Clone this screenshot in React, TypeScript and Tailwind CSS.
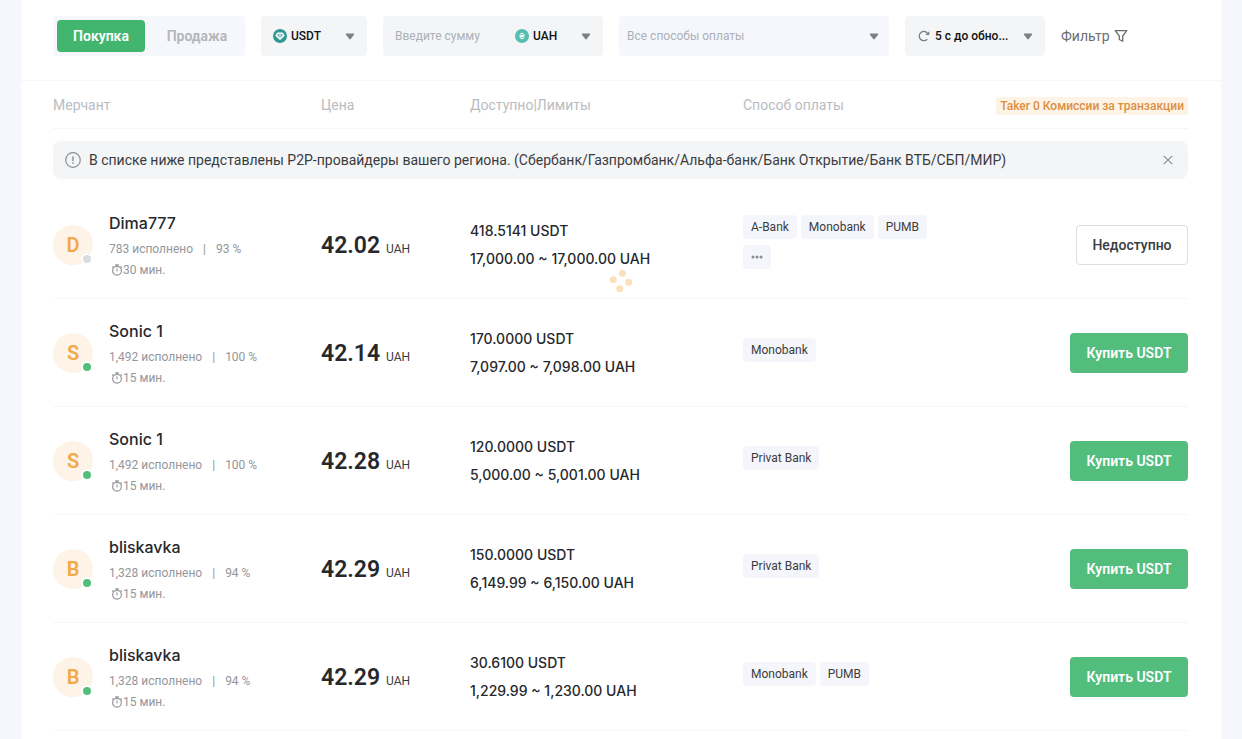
import { useState } from "react";

type Offer = {
  id: number;
  name: string;
  orders: string;
  rate: string;
  minutes: number;
  online: boolean;
  price: string;
  available: string;
  limits: string;
  methods: string[];
  more?: boolean;
};

const offers: Offer[] = [
  {
    id: 1,
    name: "Dima777",
    orders: "783",
    rate: "93 %",
    minutes: 30,
    online: false,
    price: "42.02",
    available: "418.5141 USDT",
    limits: "17,000.00 ~ 17,000.00 UAH",
    methods: ["A-Bank", "Monobank", "PUMB"],
    more: true,
  },
  {
    id: 2,
    name: "Sonic 1",
    orders: "1,492",
    rate: "100 %",
    minutes: 15,
    online: true,
    price: "42.14",
    available: "170.0000 USDT",
    limits: "7,097.00 ~ 7,098.00 UAH",
    methods: ["Monobank"],
  },
  {
    id: 3,
    name: "Sonic 1",
    orders: "1,492",
    rate: "100 %",
    minutes: 15,
    online: true,
    price: "42.28",
    available: "120.0000 USDT",
    limits: "5,000.00 ~ 5,001.00 UAH",
    methods: ["Privat Bank"],
  },
  {
    id: 4,
    name: "bliskavka",
    orders: "1,328",
    rate: "94 %",
    minutes: 15,
    online: true,
    price: "42.29",
    available: "150.0000 USDT",
    limits: "6,149.99 ~ 6,150.00 UAH",
    methods: ["Privat Bank"],
  },
  {
    id: 5,
    name: "bliskavka",
    orders: "1,328",
    rate: "94 %",
    minutes: 15,
    online: true,
    price: "42.29",
    available: "30.6100 USDT",
    limits: "1,229.99 ~ 1,230.00 UAH",
    methods: ["Monobank", "PUMB"],
  },
];

export default function App() {
  const [side, setSide] = useState<"buy" | "sell">("buy");
  const [noticeOpen, setNoticeOpen] = useState(true);

  return (
    <div className="min-h-screen bg-[#f5f7fc] font-[Roboto,'Noto_Sans',sans-serif] text-[#26282c]">
      <main className="relative mx-auto min-h-screen max-w-[1200px] bg-white">
        {/* Filters */}
        <div className="flex items-center gap-4 border-b border-[#f5f6fa] px-8 pt-4 pb-6">
          <div className="flex h-10 w-48 shrink-0 gap-2 rounded bg-[#f5f7fc] p-1">
            <SideButton active={side === "buy"} onClick={() => setSide("buy")}>
              Покупка
            </SideButton>
            <SideButton active={side === "sell"} onClick={() => setSide("sell")}>
              Продажа
            </SideButton>
          </div>

          <div className="flex h-10 w-[106px] shrink-0 items-center rounded bg-[#f3f5f7] px-3">
            <TetherIcon />
            <select
              aria-label="Монета"
              className="ml-1 min-w-0 flex-1 appearance-none bg-transparent text-xs font-medium text-[#121212] outline-none"
            >
              <option>USDT</option>
            </select>
            <CaretIcon />
          </div>

          <div className="flex h-10 w-[220px] shrink-0 items-center rounded bg-[#f3f5f7] px-3">
            <input
              type="text"
              aria-label="Сумма"
              placeholder="Введите сумму"
              className="w-[120px] bg-transparent text-xs outline-none placeholder:text-[#adb1b8]"
            />
            <HryvniaIcon />
            <select
              aria-label="Валюта"
              className="ml-1 min-w-0 flex-1 appearance-none bg-transparent text-xs font-medium text-[#121212] outline-none"
            >
              <option>UAH</option>
            </select>
            <CaretIcon />
          </div>

          <div className="flex h-10 w-[270px] items-center rounded bg-[#f5f7fc] pr-2.5 pl-2">
            <select
              aria-label="Способ оплаты"
              className="min-w-0 flex-1 appearance-none bg-transparent text-xs text-[#adb1b8] outline-none"
            >
              <option>Все способы оплаты</option>
            </select>
            <CaretIcon />
          </div>

          <div className="flex h-10 w-[140px] shrink-0 items-center rounded bg-[#f3f5f7] px-3">
            <RefreshIcon />
            <select
              aria-label="Обновление"
              className="ml-1 min-w-0 flex-1 appearance-none bg-transparent text-xs font-medium text-[#121212] outline-none"
            >
              <option>5 с до обно...</option>
            </select>
            <CaretIcon />
          </div>

          <button type="button" className="flex items-center gap-1 text-sm text-[#6b6d72]">
            Фильтр
            <FunnelIcon />
          </button>
        </div>

        {/* Offers */}
        <div className="pr-[33px] pl-8">
          <table className="w-full table-fixed border-separate border-spacing-0 text-left">
            <thead>
              <tr className="h-12 text-sm text-[#b9bcc2] [&>th]:border-b [&>th]:border-[#f5f6f8]">
                <th className="w-[268px] font-normal">Мерчант</th>
                <th className="w-[149px] font-normal">Цена</th>
                <th className="w-[273px] font-normal">Доступно|Лимиты</th>
                <th className="font-normal">Способ оплаты</th>
                <th className="w-[200px] text-right font-normal">
                  <span className="inline-block rounded-xs bg-[#fdf3e6] px-1 text-xs leading-[18px] font-medium whitespace-nowrap text-[#dc8f3f]">
                    Taker 0 Комиссии за транзакции
                  </span>
                </th>
              </tr>
            </thead>
            <tbody>
              {noticeOpen && (
                <tr>
                  <td colSpan={5} className="py-3">
                    <div className="flex h-[38px] items-center rounded-lg bg-[#f4f5f7] px-3">
                      <InfoIcon />
                      <p className="ml-2 flex-1 text-sm text-[#3a3c40]">
                        В списке ниже представлены P2P-провайдеры вашего региона.
                        (Сбербанк/Газпромбанк/Альфа-банк/Банк Открытие/Банк ВТБ/СБП/МИР)
                      </p>
                      <button type="button" aria-label="Закрыть" onClick={() => setNoticeOpen(false)}>
                        <CloseIcon />
                      </button>
                    </div>
                  </td>
                </tr>
              )}
              {offers.map((offer) => (
                <OfferRow key={offer.id} offer={offer} />
              ))}
            </tbody>
          </table>
        </div>

        <Loader />
      </main>
    </div>
  );
}

function SideButton({
  active,
  onClick,
  children,
}: {
  active: boolean;
  onClick: () => void;
  children: React.ReactNode;
}) {
  return (
    <button
      type="button"
      onClick={onClick}
      className={`h-8 rounded-sm text-sm font-semibold ${
        active ? "w-22 bg-[#42b66f] text-white" : "flex-1 text-[#b3b5b9]"
      }`}
    >
      {children}
    </button>
  );
}

function OfferRow({ offer }: { offer: Offer }) {
  return (
    <tr className="h-[108px] [&>td]:border-b [&>td]:border-[#f5f6f8]">
      <td>
        <div className="flex items-center gap-4">
          <div className="relative flex size-10 items-center justify-center rounded-full bg-[#fdf3e6] text-xl font-semibold text-[#f2a947]">
            {offer.name[0].toUpperCase()}
            <span
              className={`absolute right-0 bottom-0 size-3 rounded-full border-2 border-white ${
                offer.online ? "bg-[#53bd7e]" : "bg-[#d8dce3]"
              }`}
            />
          </div>
          <div className="pt-px">
            <p className="font-[Inter,sans-serif] text-base leading-6 font-medium">{offer.name}</p>
            <p className="mt-1 flex gap-2.5 text-xs leading-5 text-[#94969b]">
              <span>{offer.orders} исполнено</span>
              <span>|</span>
              <span>{offer.rate}</span>
            </p>
            <p className="mt-px flex items-center pl-0.5 text-xs leading-5 text-[#94969b]">
              <TimerIcon />
              {offer.minutes} мин.
            </p>
          </div>
        </div>
      </td>
      <td className="pt-1 whitespace-nowrap">
        <span className="text-[23px] font-semibold">{offer.price}</span>
        <span className="ml-1.5 text-xs text-[#3a3c40]">UAH</span>
      </td>
      <td className="font-[Inter,sans-serif] text-sm leading-7 font-medium whitespace-nowrap">
        <p>{offer.available}</p>
        <p>{offer.limits}</p>
      </td>
      <td>
        <div className="flex max-w-[200px] flex-wrap gap-x-1">
          {offer.methods.map((method) => (
            <span
              key={method}
              className="mb-1.5 h-6 rounded-sm bg-[#f5f6fb] px-2 text-xs leading-6 whitespace-nowrap text-[#3a3c40]"
            >
              {method}
            </span>
          ))}
          {offer.more && (
            <button
              type="button"
              aria-label="Ещё"
              className="mb-1.5 flex h-6 w-7 items-center justify-center rounded-sm bg-[#f5f6fb]"
            >
              <DotsIcon />
            </button>
          )}
        </div>
      </td>
      <td className="text-right">
        {offer.online ? (
          <button
            type="button"
            className="h-10 w-[118px] rounded-sm bg-[#53bd7e] text-sm font-semibold whitespace-nowrap text-white"
          >
            Купить USDT
          </button>
        ) : (
          <button
            type="button"
            className="h-10 w-28 rounded-sm border border-[#dcdde0] text-sm font-medium whitespace-nowrap text-[#3a3c40]"
          >
            Недоступно
          </button>
        )}
      </td>
    </tr>
  );
}

const Loader = () => (
  <svg
    className="absolute top-[269px] left-1/2 -translate-x-1/2"
    width="24"
    height="24"
    viewBox="0 0 24 24"
    fill="#fae0bd"
  >
    <circle cx="13.3" cy="4.2" r="3.5" />
    <circle cx="4.3" cy="10.7" r="3.5" />
    <circle cx="19.7" cy="13.3" r="3.5" />
    <circle cx="10.7" cy="19.7" r="3.5" />
  </svg>
);

const CaretIcon = () => (
  <svg className="pointer-events-none shrink-0" width="10" height="8" viewBox="0 0 10 8" fill="#7c7f86">
    <path d="M1.5 1.5h7c.6 0 .9.7.5 1.2L5.7 7c-.4.5-1 .5-1.4 0L1 2.7c-.4-.5-.1-1.2.5-1.2z" />
  </svg>
);

const TetherIcon = () => (
  <svg className="shrink-0" width="14" height="14" viewBox="0 0 14 14">
    <circle cx="7" cy="7" r="7" fill="#2f9793" />
    <path d="M4.3 3.5h5.4l2.1 3L7 11.2 2.2 6.5z" fill="#fff" />
    <path d="M4.6 5.2h4.8v1.2L7 8.8 4.6 6.4z" fill="#2f9793" />
    <path d="M5.6 5.8h2.8v.6h-.9v1.4h-1V6.400h-.9z" fill="#fff" />
  </svg>
);

const HryvniaIcon = () => (
  <svg className="shrink-0" width="14" height="14" viewBox="0 0 14 14" fill="none">
    <circle cx="7" cy="7" r="7" fill="#56bfb1" />
    <path
      d="M5.2 5c.4-.8 3.5-1 3.5.5C8.7 7 5.3 7 5.3 8.6c0 1.4 3 1.3 3.6.4M4.5 6.3h5M4.5 7.8h5"
      stroke="#fff"
      strokeWidth="1"
    />
  </svg>
);

const RefreshIcon = () => (
  <svg className="shrink-0" width="14" height="14" viewBox="0 0 14 14" fill="none" stroke="#7c7f86" strokeWidth="1.3">
    <path d="M10.2 10.2A4.6 4.6 0 1 1 10.6 4.4" />
    <path d="M12.3 2.2v3.8H8.3z" fill="#7c7f86" stroke="none" />
  </svg>
);

const FunnelIcon = () => (
  <svg width="14" height="14" viewBox="0 0 14 14" fill="none" stroke="#6b6d72" strokeWidth="1.3">
    <path d="M1.2 1.6h11.6L8.7 7v5.3L5.3 10.5V7z" strokeLinejoin="round" />
  </svg>
);

const InfoIcon = () => (
  <svg className="shrink-0" width="16" height="16" viewBox="0 0 16 16" fill="none" stroke="#8b8e94">
    <circle cx="8" cy="8" r="7.3" strokeWidth="1.2" />
    <path d="M8 4.2v4.9M8 10.3v1.5" strokeWidth="1.4" />
  </svg>
);

const CloseIcon = () => (
  <svg width="16" height="16" viewBox="0 0 16 16" fill="none" stroke="#8b8e94" strokeWidth="1.2">
    <path d="M3.8 3.8l8.4 8.4M12.2 3.8l-8.4 8.4" />
  </svg>
);

const TimerIcon = () => (
  <svg className="shrink-0" width="12" height="12" viewBox="0 0 12 12" fill="none" stroke="#94969b">
    <circle cx="6" cy="6.8" r="4.4" strokeWidth="1.2" />
    <path d="M4.2.8h3.6M6 1v1.5M6 4.5v2.8M9.6 2.4l1.2 1.2M2.4 2.4L1.2 3.6" strokeWidth="1.2" />
  </svg>
);

const DotsIcon = () => (
  <svg width="12" height="4" viewBox="0 0 12 4" fill="#8b8e94">
    <circle cx="2" cy="2" r="1.5" />
    <circle cx="6" cy="2" r="1.5" />
    <circle cx="10" cy="2" r="1.5" />
  </svg>
);
